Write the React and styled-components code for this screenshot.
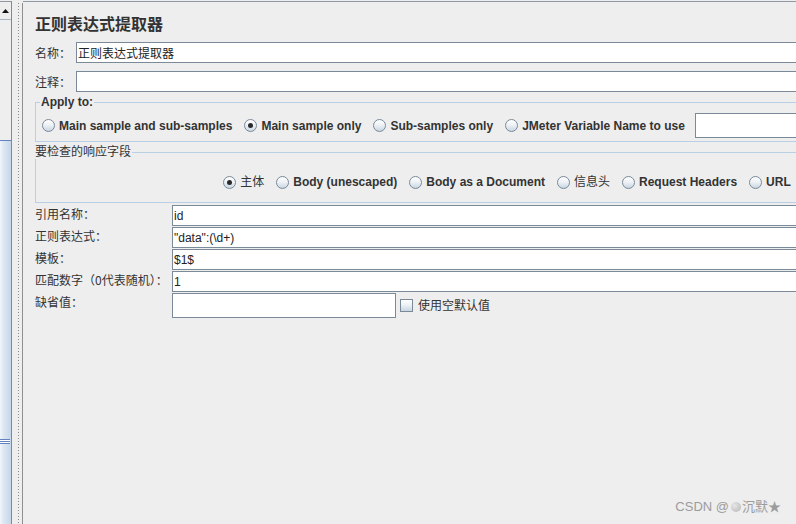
import React from 'react';
import styled, { createGlobalStyle } from 'styled-components';

const GlobalStyle = createGlobalStyle`
  html, body { margin: 0; padding: 0; background: #eeeeee; overflow: hidden; }
  body {
    font-family: "Liberation Sans", "Noto Sans CJK SC", sans-serif;
    font-size: 12px;
    color: #333333;
  }
  * { box-sizing: border-box; }
`;

const Frame = styled.div`
  position: relative;
  display: flex;
  width: 796px;
  height: 524px;
  overflow: hidden;
  background: #eeeeee;
`;

const ScrollBar = styled.div`
  flex: 0 0 12px;
  display: flex;
  flex-direction: column;
  margin-top: 1px;
  border-top: 1px solid #8e99a4;
  border-right: 1px solid #7d8a97;
`;

const ArrowButton = styled.div`
  height: 18px;
  display: flex;
  align-items: center;
  justify-content: center;
  border-bottom: 1px solid #a8b6c4;
  padding-right: 1px;
`;

const Track = styled.div`
  flex: 1;
  display: flex;
  flex-direction: column;
`;

const Thumb = styled.div`
  flex: 1;
  margin-top: 120px;
  border-top: 1px solid #6382bf;
  background: linear-gradient(to right, #f2f6fb 0%, #dbe6f2 35%, #c5d7ea 100%);
  display: flex;
  flex-direction: column;
`;

const Grip = styled.div`
  margin-top: 298px;
  width: 10px;
  height: 5px;
  background: repeating-linear-gradient(to bottom, #6382bf 0 1px, #ffffff 1px 2px);
`;

const Divider = styled.div`
  flex: 0 0 11px;
  border-right: 1px solid #8f8f8f;
  margin-top: 3px;
  background-image: repeating-linear-gradient(to bottom, #8a8a8a 0 1px, transparent 1px 3px);
  background-size: 1px 100%;
  background-position: 6px 0;
  background-repeat: no-repeat;
`;

const Main = styled.div`
  flex: 0 0 968px;
  margin-top: 1px;
  border-top: 1px solid #8e99a4;
  padding-left: 12px;
  display: flex;
  flex-direction: column;
`;

const Content = styled.div`
  width: 944px;
  display: flex;
  flex-direction: column;
`;

const Title = styled.div`
  margin-top: 11px;
  font-family: "Noto Sans CJK SC", sans-serif;
  font-size: 16px;
  font-weight: bold;
  line-height: 20px;
  color: #333333;
`;

const Row = styled.div`
  display: flex;
  align-items: center;
  margin-top: ${p => p.$gap}px;
`;

const RowLabel = styled.div`
  flex: 0 0 41px;
  font-family: "Noto Sans CJK SC", sans-serif;
  font-size: 12px;
  line-height: 16px;
`;

const TextField = styled.div`
  flex: ${p => (p.$width ? `0 0 ${p.$width}px` : '1')};
  height: ${p => p.$h || 21}px;
  margin-left: ${p => p.$ml || 0}px;
  border: 1px solid #7a8a99;
  background: #ffffff;
  padding: 0 1px;
  display: flex;
  align-items: center;
  font-family: "Liberation Sans", "Noto Sans CJK SC", sans-serif;
  font-size: 12px;
  color: #222222;
  white-space: pre;
  overflow: hidden;
`;

const Group = styled.fieldset`
  margin: 3px 0 0 0;
  width: 100%;
  min-width: 0;
  border: 1px solid #b8cfe5;
  padding: ${p => p.$pad};
`;

const Legend = styled.legend`
  margin-left: -2px;
  padding: 0 1px;
  font-family: "Liberation Sans", "Noto Sans CJK SC", sans-serif;
  font-size: 12px;
  line-height: 14px;
  font-weight: ${p => (p.$cjk ? 'normal' : 'bold')};
  color: #333333;
`;

const RadioRow = styled.div`
  display: flex;
  align-items: center;
  justify-content: ${p => (p.$center ? 'center' : 'flex-start')};
  gap: ${p => p.$gap}px;
  height: ${p => p.$h}px;
`;

const Option = styled.label`
  display: flex;
  align-items: center;
  gap: ${p => p.$gap || 4}px;
  font-family: "Liberation Sans", "Noto Sans CJK SC", sans-serif;
  font-size: 12px;
  line-height: 16px;
  font-weight: ${p => (p.$cjk ? 'normal' : 'bold')};
  color: #333333;
  white-space: nowrap;
`;

const RadioCircle = styled.span`
  width: 13px;
  height: 13px;
  border-radius: 50%;
  border: 1px solid #7a8a99;
  background: linear-gradient(to bottom, #ffffff 0%, #eef2f6 45%, #c9d6e3 100%);
  display: flex;
  align-items: center;
  justify-content: center;
`;

const Dot = styled.span`
  width: 5px;
  height: 5px;
  border-radius: 50%;
  background: #2a2a2a;
`;

const CheckBox = styled.span`
  width: 13px;
  height: 13px;
  border: 1px solid #7a8a99;
  background: linear-gradient(to bottom, #ffffff 0%, #eef2f6 45%, #c9d6e3 100%);
`;

const FieldGrid = styled.div`
  margin-top: 2px;
  display: grid;
  grid-template-columns: 137px 1fr;
  row-gap: 1px;
`;

const FieldLabel = styled.div`
  align-self: start;
  padding-top: 1px;
  font-family: "Noto Sans CJK SC", sans-serif;
  font-size: 12px;
  line-height: 16px;
  color: #333333;
  white-space: nowrap;
`;

const FieldValue = styled.div`
  display: flex;
  align-items: center;
`;

const Watermark = styled.div`
  position: absolute;
  right: 15px;
  top: 498px;
  display: flex;
  align-items: center;
  font-family: "Liberation Sans", "Noto Sans CJK SC", sans-serif;
  font-size: 13px;
  line-height: 18px;
  color: #9c9c9c;
  white-space: nowrap;
`;

const Ball = styled.span`
  display: inline-block;
  width: 10px;
  height: 10px;
  margin: 0 1px 0 2px;
  border-radius: 50%;
  background: radial-gradient(circle at 35% 35%, #e6e6e6 0%, #c4c4c4 70%, #acacac 100%);
`;

function Radio({ checked, label, cjk }) {
  return (
    <Option $cjk={cjk}>
      <RadioCircle>{checked && <Dot />}</RadioCircle>
      <span>{label}</span>
    </Option>
  );
}

const applyOptions = [
  { label: 'Main sample and sub-samples' },
  { label: 'Main sample only', checked: true },
  { label: 'Sub-samples only' },
  { label: 'JMeter Variable Name to use' },
];

const fieldOptions = [
  { label: '主体', checked: true, cjk: true },
  { label: 'Body (unescaped)' },
  { label: 'Body as a Document' },
  { label: '信息头', cjk: true },
  { label: 'Request Headers' },
  { label: 'URL' },
];

const fields = [
  { label: '引用名称：', value: 'id' },
  { label: '正则表达式：', value: '"data":(\\d+)' },
  { label: '模板：', value: '$1$' },
  { label: '匹配数字（0代表随机）：', value: '1' },
];

export default function App() {
  return (
    <>
      <GlobalStyle />
      <Frame>
        <ScrollBar>
          <ArrowButton>
            <svg width="7" height="4" viewBox="0 0 7 4">
              <polygon points="0,4 7,4 3.5,0" fill="#111" />
            </svg>
          </ArrowButton>
          <Track>
            <Thumb>
              <Grip />
            </Thumb>
          </Track>
        </ScrollBar>
        <Divider />
        <Main>
          <Content>
            <Title>正则表达式提取器</Title>
            <Row $gap={9}>
              <RowLabel>名称：</RowLabel>
              <TextField>正则表达式提取器</TextField>
            </Row>
            <Row $gap={8}>
              <RowLabel>注释：</RowLabel>
              <TextField />
            </Row>
            <Group $pad="4px 0 3px 6px">
              <Legend>Apply to:</Legend>
              <RadioRow $gap={12} $h={25}>
                {applyOptions.map(o => (
                  <Radio key={o.label} {...o} />
                ))}
                <TextField $h={25} $ml={-2} />
              </RadioRow>
            </Group>
            <Group $pad="15px 0 12px 0">
              <Legend $cjk>要检查的响应字段</Legend>
              <RadioRow $center $gap={12} $h={16}>
                {fieldOptions.map(o => (
                  <Radio key={o.label} {...o} />
                ))}
              </RadioRow>
            </Group>
            <FieldGrid>
              {fields.map(f => (
                <React.Fragment key={f.label}>
                  <FieldLabel>{f.label}</FieldLabel>
                  <FieldValue>
                    <TextField>{f.value}</TextField>
                  </FieldValue>
                </React.Fragment>
              ))}
              <FieldLabel>缺省值：</FieldLabel>
              <FieldValue>
                <TextField $width={224} $h={25} />
                <Option $cjk $gap={5} style={{ marginLeft: 4 }}>
                  <CheckBox />
                  <span>使用空默认值</span>
                </Option>
              </FieldValue>
            </FieldGrid>
          </Content>
        </Main>
        <Watermark>
          CSDN @<Ball />沉默★
        </Watermark>
      </Frame>
    </>
  );
}
